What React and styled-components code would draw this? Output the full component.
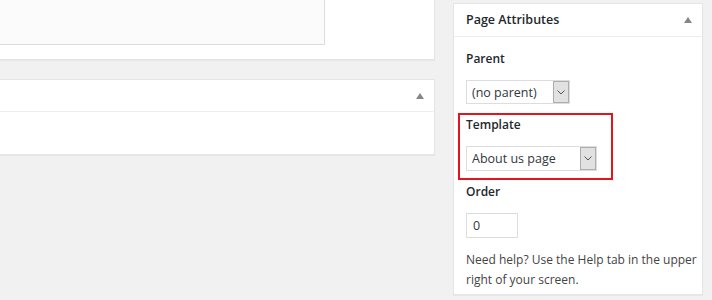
import styled, { createGlobalStyle } from "styled-components";

const GlobalStyle = createGlobalStyle`
	body {
		margin: 0;
		background: #f1f1f1;
		font-family: "Open Sans", "Liberation Sans", sans-serif;
		color: #23282d;
	}
`;

const Page = styled.div`
	display: flex;
	align-items: flex-start;
	width: 712px;
	height: 300px;
	overflow: hidden;
`;

const LeftColumn = styled.div`
	display: flex;
	flex-direction: column;
	gap: 19px;
	width: 435px;
	margin-top: -20px;
	flex-shrink: 0;
`;

const RightColumn = styled.div`
	width: 250px;
	margin-left: 18px;
	margin-top: 3px;
	flex-shrink: 0;
`;

const Postbox = styled.div`
	background: #fff;
	border: 1px solid #e5e5e5;
	border-left: ${(p) => (p.$cut ? "none" : "1px solid #e5e5e5")};
	box-shadow: 0 1px 1px rgba(0, 0, 0, 0.04);
`;

const EditorBody = styled.div`
	padding-bottom: 14px;
`;

const TextArea = styled.div`
	box-sizing: border-box;
	width: 325px;
	height: 64px;
	background: #fbfbfb;
	border: 1px solid #ddd;
	border-left: none;
`;

const Header = styled.div`
	display: flex;
	align-items: center;
	justify-content: space-between;
	height: ${(p) => p.$h}px;
	padding: 0 10px 0 12px;
	border-bottom: 1px solid #eee;
`;

const Title = styled.h2`
	margin: 0;
	font-size: 12.5px;
	font-weight: 600;
	line-height: 1.4;
	color: #23282d;
`;

const Toggle = styled.span`
	width: 0;
	height: 0;
	border-left: 4px solid transparent;
	border-right: 4px solid transparent;
	border-bottom: 6px solid #82878c;
`;

const EmptyBody = styled.div`
	height: 42px;
`;

const Body = styled.div`
	padding: 12px 12px 4px 12px;
`;

const Label = styled.div`
	font-size: 12px;
	font-weight: 600;
	line-height: 20px;
	margin-top: ${(p) => p.$mt || 0}px;
`;

const Highlight = styled.div`
	box-sizing: border-box;
	width: 155px;
	margin: 9px 0 0 -8px;
	padding: 0 0 7px 6px;
	border: 2px solid #e3141c;
`;

const Select = styled.div`
	box-sizing: border-box;
	display: flex;
	align-items: stretch;
	width: ${(p) => p.$w}px;
	height: ${(p) => p.$h}px;
	margin-top: ${(p) => p.$mt}px;
	border: 1px solid #ddd;
	background: #fff;
`;

const SelectText = styled.span`
	flex: 1;
	display: flex;
	align-items: center;
	padding-left: 5px;
	font-size: 12.5px;
	color: #32373c;
	white-space: nowrap;
`;

const ArrowBox = styled.span`
	box-sizing: border-box;
	display: flex;
	align-items: center;
	justify-content: center;
	width: 16px;
	background: #e1e1e1;
	border: 1px solid #adadad;
`;

const Input = styled.div`
	box-sizing: border-box;
	display: flex;
	align-items: center;
	width: 52px;
	height: 25px;
	margin-top: 11px;
	padding-left: 6px;
	border: 1px solid #ddd;
	background: #fff;
	font-size: 12.5px;
	color: #32373c;
`;

const Help = styled.p`
	margin: 12px -10px 0 0;
	font-size: 12px;
	line-height: 20px;
	color: #444;
`;

const Chevron = () => (
	<svg width="8" height="5" viewBox="0 0 8 5">
		<path d="M0.5 0.5 L4 4 L7.5 0.5" fill="none" stroke="#555" strokeWidth="1" />
	</svg>
);

const Dropdown = ({ value, w, h, mt }) => (
	<Select $w={w} $h={h} $mt={mt}>
		<SelectText>{value}</SelectText>
		<ArrowBox>
			<Chevron />
		</ArrowBox>
	</Select>
);

export default function App() {
	return (
		<Page>
			<GlobalStyle />
			<LeftColumn>
				<Postbox $cut>
					<EditorBody>
						<TextArea />
					</EditorBody>
				</Postbox>
				<Postbox $cut>
					<Header $h={31}>
						<span />
						<Toggle />
					</Header>
					<EmptyBody />
				</Postbox>
			</LeftColumn>

			<RightColumn>
				<Postbox>
					<Header $h={32}>
						<Title>Page Attributes</Title>
						<Toggle />
					</Header>
					<Body>
						<Label>Parent</Label>
						<Dropdown value="(no parent)" w={104} h={24} mt={11} />
						<Highlight>
							<Label>Template</Label>
							<Dropdown value="About us page" w={131} h={25} mt={11} />
						</Highlight>
						<Label $mt={2}>Order</Label>
						<Input>0</Input>
						<Help>Need help? Use the Help tab in the upper right of your screen.</Help>
					</Body>
				</Postbox>
			</RightColumn>
		</Page>
	);
}
